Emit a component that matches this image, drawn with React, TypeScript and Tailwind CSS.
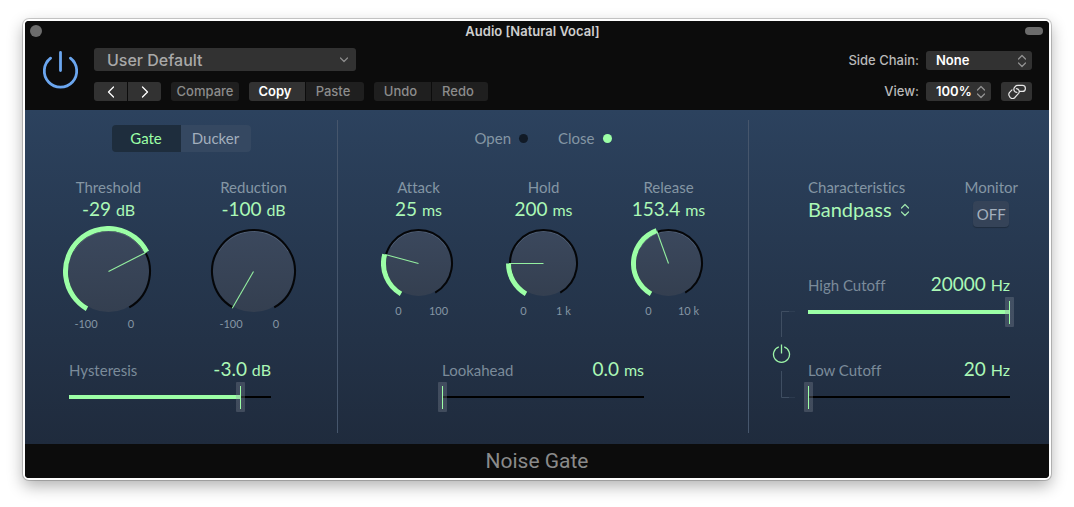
import { useId, useState } from "react";
import type { ReactNode } from "react";

const point = (c: number, r: number, deg: number) => {
  const a = (deg * Math.PI) / 180;
  return [c + r * Math.sin(a), c - r * Math.cos(a)];
};

const arc = (c: number, r: number, from: number, to: number) => {
  const [x1, y1] = point(c, r, from);
  const [x2, y2] = point(c, r, to);
  return `M${x1} ${y1}A${r} ${r} 0 ${to - from > 180 ? 1 : 0} 1 ${x2} ${y2}`;
};

type KnobProps = {
  label: string;
  unit: string;
  min: number;
  max: number;
  initial: number;
  curve?: number;
  digits?: number;
  ticks: [string, string];
  large?: boolean;
};

function Knob({ label, unit, min, max, initial, curve = 1, digits = 0, ticks, large = false }: KnobProps) {
  const id = useId();
  const [pos, setPos] = useState(Math.pow((initial - min) / (max - min), 1 / curve));
  const value = min + (max - min) * Math.pow(pos, curve);
  const size = large ? 91 : 75;
  const c = size / 2;
  const angle = 210 + pos * 300;
  const [nx, ny] = point(c, c - 3, angle);

  return (
    <div className="flex flex-col items-center">
      <label htmlFor={id} className="text-[15px] leading-5 text-[#8496a4]">
        {label}
      </label>
      <Value text={value.toFixed(digits)} unit={unit} />
      <div className="relative mt-[5px]">
        <svg width={size} height={size} className="block">
          <defs>
            <linearGradient id={`${id}-disc`} x1="0" y1="0" x2="0" y2="1">
              <stop offset="0" stopColor="#3b485d" />
              <stop offset="1" stopColor="#343f50" />
            </linearGradient>
          </defs>
          <circle cx={c} cy={c} r={c - 5} fill={`url(#${id}-disc)`} />
          <path d={arc(c, c - 5.4, 300, 420)} fill="none" stroke="#56647a" strokeWidth="0.8" />
          <path d={arc(c, c - 4, 210, 510)} fill="none" stroke="#050608" strokeWidth="2" />
          {pos > 0 && <path d={arc(c, c - 2.5, 210, angle)} fill="none" stroke="#9cffa6" strokeWidth="5" />}
          <line x1={c} y1={c} x2={nx} y2={ny} stroke="#94f0a0" strokeWidth="1.1" />
        </svg>
        <input
          id={id}
          type="range"
          min={0}
          max={1}
          step="any"
          value={pos}
          onChange={(e) => setPos(Number(e.target.value))}
          className="absolute inset-0 h-full w-full cursor-pointer opacity-0"
        />
      </div>
      <div
        className={
          large
            ? "mt-px grid w-[90px] grid-cols-2 text-center text-[11px] leading-3 text-[#8496a4]"
            : "mt-1 grid w-[80px] grid-cols-2 text-center text-[11px] leading-3 text-[#8496a4]"
        }
      >
        <span>{ticks[0]}</span>
        <span>{ticks[1]}</span>
      </div>
    </div>
  );
}

function Value({ text, unit }: { text: string; unit: string }) {
  return (
    <output className="block h-6 text-[19px] leading-6 whitespace-nowrap text-[#abf8b6]">
      {text} <span className="text-[16px] leading-none">{unit}</span>
    </output>
  );
}

type SliderProps = {
  label: string;
  unit: string;
  min: number;
  max: number;
  initial: number;
  digits?: number;
};

function Slider({ label, unit, min, max, initial, digits = 0 }: SliderProps) {
  const id = useId();
  const [value, setValue] = useState(initial);
  const pct = ((value - min) / (max - min)) * 100;

  return (
    <div>
      <div className="flex h-6 items-baseline justify-between">
        <label htmlFor={id} className="text-[15px] leading-5 text-[#7b8b9a]">
          {label}
        </label>
        <Value text={value.toFixed(digits)} unit={unit} />
      </div>
      <div
        className="mt-px h-[30px] bg-[linear-gradient(#9cffa6,#9cffa6),linear-gradient(#000,#000)] bg-left bg-no-repeat"
        style={{ backgroundSize: `${pct}% 4px, 100% 2px` }}
      >
        <input
          id={id}
          type="range"
          min={min}
          max={max}
          step="any"
          value={value}
          onChange={(e) => setValue(Number(e.target.value))}
          className="-mx-1 block h-[30px] w-[calc(100%+8px)] cursor-pointer appearance-none bg-transparent [&::-webkit-slider-thumb]:h-[30px] [&::-webkit-slider-thumb]:w-[9px] [&::-webkit-slider-thumb]:appearance-none [&::-webkit-slider-thumb]:rounded-[1px] [&::-webkit-slider-thumb]:bg-[linear-gradient(#9cffa6,#9cffa6),linear-gradient(#8c93a04d,#8c93a04d)] [&::-webkit-slider-thumb]:bg-[length:1px_23px,100%_100%] [&::-webkit-slider-thumb]:bg-center [&::-webkit-slider-thumb]:bg-no-repeat"
        />
      </div>
    </div>
  );
}

function UpDown({ className }: { className: string }) {
  return (
    <svg width="10" height="14" viewBox="0 0 10 14" fill="none" strokeWidth="1.2" stroke="currentColor" className={className}>
      <path d="M1.5 5 5 1.5 8.5 5M1.5 9 5 12.5 8.5 9" strokeLinecap="round" strokeLinejoin="round" />
    </svg>
  );
}

function PluginPower() {
  return (
    <button type="button" aria-label="Power" className="block text-[#6ba6ef]">
      <svg width="37" height="40" viewBox="0 0 37 40" fill="none" stroke="currentColor" strokeWidth="2.8" strokeLinecap="round">
        <path d="M8.6 8.2A16.2 16.2 0 1 0 28.4 8.2M18.5 2.4V20.5" />
      </svg>
    </button>
  );
}

function ToolButton({ children, className, label }: { children: ReactNode; className: string; label?: string }) {
  return (
    <button type="button" aria-label={label} className={`flex h-[19px] items-center justify-center text-[13px] leading-none ${className}`}>
      {children}
    </button>
  );
}

function Header() {
  return (
    <header className="bg-[#0c0c0c] font-['Inter',sans-serif]">
      <div className="grid h-5 grid-cols-3 items-center pr-[6px] pl-[5px]">
        <button type="button" aria-label="Close" className="size-3 rounded-full bg-[#6c6c6c]" />
        <h1 className="pr-2 text-center text-[13px] leading-5 font-semibold text-[#cfcfcf]">Audio [Natural Vocal]</h1>
        <button type="button" aria-label="Collapse" className="h-2 w-[18px] justify-self-end rounded-full bg-[#6c6c6c]" />
      </div>
      <div className="flex h-[69px] items-start justify-between pr-[17px] pl-[17px]">
        <div className="flex">
          <div className="pt-[9px]">
            <PluginPower />
          </div>
          <div className="ml-[15px] pt-[7px]">
            <div className="relative w-[262px]">
              <select
                aria-label="Preset"
                className="block h-[23px] w-full appearance-none rounded-[3px] bg-[#323232] pt-px pl-[13px] text-[16px] leading-[22px] font-medium text-[#a9a9a9]"
              >
                <option>User Default</option>
              </select>
              <svg width="10" height="6" viewBox="0 0 10 6" fill="none" stroke="#8d8d8d" strokeWidth="1.2" className="pointer-events-none absolute top-[9px] right-[7px]">
                <path d="M1.5 1 5 4.5 8.5 1" strokeLinecap="round" strokeLinejoin="round" />
              </svg>
            </div>
            <div className="mt-[11px] flex gap-[10px] text-[#8c8c8c]">
              <div className="flex gap-px text-white">
                <ToolButton label="Previous" className="w-[33px] rounded-l-[3px] bg-[#323232]">
                  <svg width="8" height="12" viewBox="0 0 8 12" fill="none" stroke="currentColor" strokeWidth="1.3">
                    <path d="M6.5 1 1.5 6l5 5" strokeLinecap="round" strokeLinejoin="round" />
                  </svg>
                </ToolButton>
                <ToolButton label="Next" className="w-[33px] rounded-r-[3px] bg-[#323232]">
                  <svg width="8" height="12" viewBox="0 0 8 12" fill="none" stroke="currentColor" strokeWidth="1.3">
                    <path d="m1.5 1 5 5-5 5" strokeLinecap="round" strokeLinejoin="round" />
                  </svg>
                </ToolButton>
              </div>
              <ToolButton className="w-[68px] rounded-[3px] bg-[#1f1f1f] font-medium">Compare</ToolButton>
              <div className="flex gap-px">
                <ToolButton className="w-[56px] rounded-l-[3px] bg-[#323232] pr-1 font-semibold text-white">Copy</ToolButton>
                <ToolButton className="w-[58px] rounded-r-[3px] bg-[#1f1f1f] pr-1 font-medium">Paste</ToolButton>
              </div>
              <div className="flex gap-px">
                <ToolButton className="w-[57px] rounded-l-[3px] bg-[#1f1f1f] pr-1 font-medium">Undo</ToolButton>
                <ToolButton className="w-[56px] rounded-r-[3px] bg-[#1f1f1f] pr-1 font-medium">Redo</ToolButton>
              </div>
            </div>
          </div>
        </div>
        <div className="grid grid-cols-[auto_106px] items-center gap-x-[7px] gap-y-3 pt-[10px] text-[13px] leading-[19px]">
          <label htmlFor="side-chain" className="text-right font-medium text-[#b9b9b9]">
            Side Chain:
          </label>
          <div className="relative">
            <select id="side-chain" className="block h-[19px] w-full appearance-none rounded-[3px] bg-[#323232] pl-[10px] font-semibold text-white">
              <option>None</option>
            </select>
            <UpDown className="pointer-events-none absolute top-[3px] right-[5px] text-[#949494]" />
          </div>
          <label htmlFor="view" className="text-right font-medium text-[#b9b9b9]">
            View:
          </label>
          <div className="flex justify-between">
            <div className="relative">
              <select id="view" className="block h-[19px] w-[65px] appearance-none rounded-[3px] bg-[#323232] pl-[10px] font-semibold text-white">
                <option>100%</option>
              </select>
              <UpDown className="pointer-events-none absolute top-[3px] right-[5px] text-[#949494]" />
            </div>
            <ToolButton label="Link" className="w-[31px] rounded-[3px] bg-[#323232] text-[#e6e6e6]">
              <svg width="20" height="15" viewBox="0 0 20 15" fill="none" stroke="currentColor" strokeWidth="1.2" strokeLinecap="round">
                <path d="M9.8 8.4A3.1 3.1 0 0 1 7.2 3.9L8.2 2.6A3 3 0 0 1 10.6 1.4H15.4A3 3 0 0 1 15.4 7.4H12.6" />
                <path d="M9.4 4.6A3 3 0 0 1 11.6 9.4L8.6 12.6A3.3 3.3 0 0 1 2.4 12.2A3.2 3.2 0 0 1 2.4 8.6L5 5.9" />
              </svg>
            </ToolButton>
          </div>
        </div>
      </div>
    </header>
  );
}

function ModePanel() {
  const [mode, setMode] = useState("Gate");
  return (
    <section className="flex flex-col pt-[15px] pb-8">
      <div className="flex h-[27px] justify-center">
        <div className="flex overflow-hidden rounded-[4px]">
          {["Gate", "Ducker"].map((name) => (
            <button
              key={name}
              type="button"
              aria-pressed={mode === name}
              onClick={() => setMode(name)}
              className={
                mode === name
                  ? "w-[69px] bg-[#1e2d3d] text-[15px] leading-[27px] text-[#9cffa6]"
                  : "w-[70px] bg-[#354861] text-[15px] leading-[27px] text-[#a3afbd]"
              }
            >
              {name}
            </button>
          ))}
        </div>
      </div>
      <div className="mt-[25px] grid grid-cols-2 px-[11px]">
        <Knob large label="Threshold" unit="dB" min={-100} max={0} initial={-29} ticks={["-100", "0"]} />
        <Knob large label="Reduction" unit="dB" min={-100} max={0} initial={-100} ticks={["-100", "0"]} />
      </div>
      <div className="mt-[27px] pr-[66px] pl-11">
        <Slider label="Hysteresis" unit="dB" min={-20} max={0} initial={-3} digits={1} />
      </div>
    </section>
  );
}

function EnvelopePanel() {
  return (
    <section className="flex flex-col pt-[15px] pb-8">
      <div className="flex h-[27px] items-center justify-center gap-[30px] text-[15px] text-[#8496a4]">
        <span className="flex items-center gap-2">
          Open <i className="size-[9px] rounded-full bg-[#111a26]" />
        </span>
        <span className="flex items-center gap-2">
          Close <i className="size-[9px] rounded-full bg-[#9cffa6]" />
        </span>
      </div>
      <div className="mt-[25px] grid grid-cols-3 pr-[17px] pl-[18px]">
        <Knob label="Attack" unit="ms" min={0} max={100} initial={25} ticks={["0", "100"]} />
        <Knob label="Hold" unit="ms" min={0} max={1000} initial={200} ticks={["0", "1 k"]} />
        <Knob label="Release" unit="ms" min={0} max={10000} initial={153.4} curve={5} digits={1} ticks={["0", "10 k"]} />
      </div>
      <div className="mt-auto px-[104px]">
        <Slider label="Lookahead" unit="ms" min={0} max={100} initial={0} digits={1} />
      </div>
    </section>
  );
}

function FilterPanel() {
  const [monitor, setMonitor] = useState(false);
  return (
    <section className="flex flex-col pt-[67px] pb-8">
      <div className="flex justify-between pr-[31px] pl-[59px]">
        <div>
          <label htmlFor="characteristics" className="block text-[15px] leading-5 text-[#8496a4]">
            Characteristics
          </label>
          <div className="relative w-[102px]">
            <select id="characteristics" className="block h-6 w-full appearance-none text-[20px] leading-6 text-[#abf8b6]">
              <option>Bandpass</option>
            </select>
            <UpDown className="pointer-events-none absolute top-[6px] right-0 text-[#9fe5ad]" />
          </div>
        </div>
        <div className="flex flex-col items-center">
          <span id="monitor" className="text-[15px] leading-5 text-[#8496a4]">
            Monitor
          </span>
          <button
            type="button"
            aria-labelledby="monitor"
            aria-pressed={monitor}
            onClick={() => setMonitor(!monitor)}
            className="mt-1 h-[26px] w-9 rounded-[4px] bg-[#354358] text-[15px] leading-[26px] text-[#a3afbd] shadow-[0_1px_1px_#00000040]"
          >
            {monitor ? "ON" : "OFF"}
          </button>
        </div>
      </div>
      <div className="mt-auto flex pr-[39px]">
        <div className="flex w-[59px] flex-col justify-between pt-[39px] pb-[14px] pl-[23px] text-[#3f4e62]">
          <svg width="24" height="26" fill="none" stroke="currentColor" className="block">
            <path d="M9.5 26V.5H17" />
            <path d="M17 .5H23" opacity="0.4" />
          </svg>
          <button type="button" aria-label="Filter" className="text-[#9df5a8]">
            <svg width="20" height="20" viewBox="0 0 20 20" fill="none" stroke="currentColor" strokeWidth="1.3">
              <path d="M6.8 2.9A8 8 0 1 0 12.2 2.9M9.5 .5V9.5" />
            </svg>
          </button>
          <svg width="24" height="27" fill="none" stroke="currentColor" className="block">
            <path d="M9.5 0V26.5H17" />
            <path d="M17 26.5H23" opacity="0.4" />
          </svg>
        </div>
        <div className="flex flex-1 flex-col gap-[30px]">
          <Slider label="High Cutoff" unit="Hz" min={20} max={20000} initial={20000} />
          <Slider label="Low Cutoff" unit="Hz" min={20} max={20000} initial={20} />
        </div>
      </div>
    </section>
  );
}

export default function App() {
  return (
    <main className="bg-white px-[23px] pt-[19px] pb-[27px]">
      <div className="overflow-hidden rounded-[6px] border-2 border-white bg-[#0c0c0c] shadow-[0_0_0_1px_#00000030,0_6px_16px_#00000050]">
        <Header />
        <div className="grid grid-cols-[312fr_1px_410fr_1px_300fr] bg-linear-to-b from-[#2c425e] to-[#1f2b3d] font-['Lato',sans-serif] [font-variant-ligatures:none]">
          <ModePanel />
          <div className="mt-[10px] mb-[11px] bg-[#46566c]" />
          <EnvelopePanel />
          <div className="mt-[10px] mb-[11px] bg-[#46566c]" />
          <FilterPanel />
        </div>
        <footer className="flex h-[34px] items-center justify-center bg-[#0c0c0c] font-['Roboto',sans-serif] text-[21px] leading-none text-[#8a8a8a]">
          Noise Gate
        </footer>
      </div>
    </main>
  );
}
